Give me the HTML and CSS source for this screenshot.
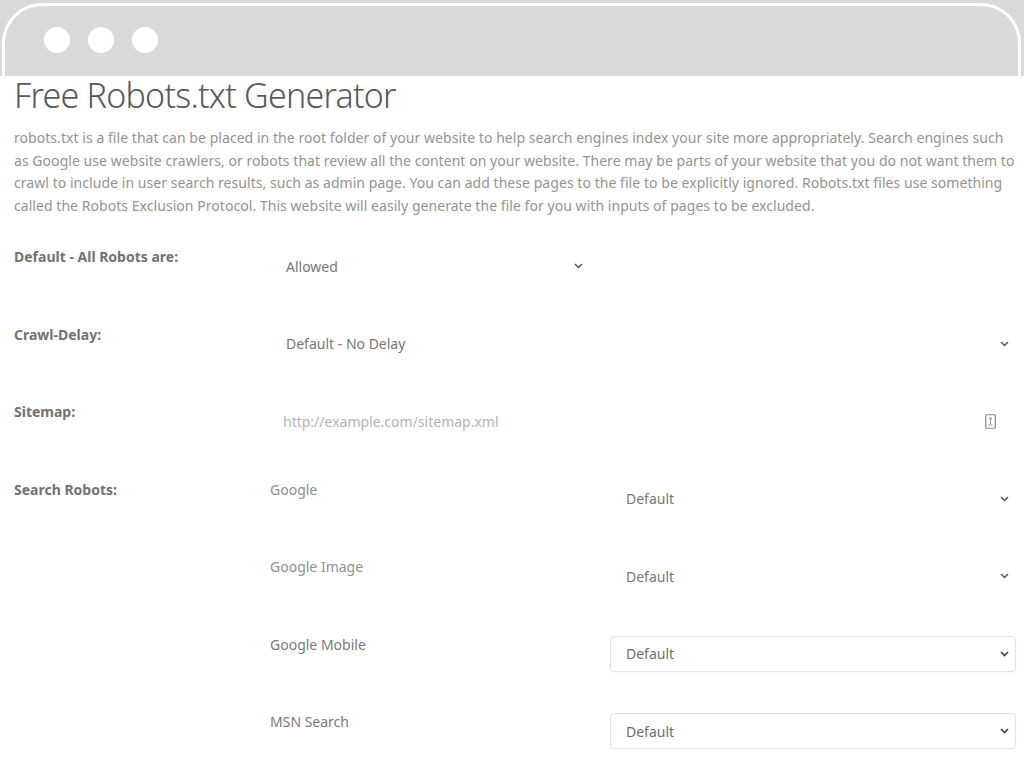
FILE: index.html
```html
<!DOCTYPE html>
<html lang="en">
<head>
<meta charset="utf-8">
<title>Free Robots.txt Generator</title>
<link rel="stylesheet" href="styles.css">
</head>
<body>
<header class="topbar">
  <div class="window">
    <span class="dot"></span><span class="dot"></span><span class="dot"></span>
  </div>
</header>
<main class="content">
  <h1 class="title">Free Robots.txt Generator</h1>
  <p class="intro">robots.txt is a file that can be placed in the root folder of your website to help search engines index your site more appropriately. Search engines such as Google use website crawlers, or robots that review all the content on your website. There may be parts of your website that you do not want them to crawl to include in user search results, such as admin page. You can add these pages to the file to be explicitly ignored. Robots.txt files use something called the Robots Exclusion Protocol. This website will easily generate the file for you with inputs of pages to be excluded.</p>

  <div class="form">
    <div class="row">
      <div class="label">Default - All Robots are:</div>
      <div class="select half"><span>Allowed</span><svg class="chev" width="9" height="6" viewBox="0 0 9 6"><path d="M1 1l3.5 3.5L8 1" fill="none" stroke="#555" stroke-width="1.5"/></svg></div>
    </div>
    <div class="row">
      <div class="label">Crawl-Delay:</div>
      <div class="select"><span>Default - No Delay</span><svg class="chev" width="9" height="6" viewBox="0 0 9 6"><path d="M1 1l3.5 3.5L8 1" fill="none" stroke="#555" stroke-width="1.5"/></svg></div>
    </div>
    <div class="row">
      <div class="label">Sitemap:</div>
      <div class="input"><span class="placeholder">http://example.com/sitemap.xml</span><svg class="card" width="11" height="15" viewBox="0 0 11 15"><rect x="0.75" y="0.75" width="9.5" height="13.5" rx="1" fill="none" stroke="#888" stroke-width="1.2"/><circle cx="5.5" cy="4.6" r="1.3" fill="#999"/><path d="M5.5 6v3.6M3.4 11h4.2" stroke="#999" stroke-width="1"/></svg></div>
    </div>
    <div class="row">
      <div class="label">Search Robots:</div>
      <div class="robots">
        <div class="robot">
          <div class="sublabel">Google</div>
          <div class="select"><span>Default</span><svg class="chev" width="9" height="6" viewBox="0 0 9 6"><path d="M1 1l3.5 3.5L8 1" fill="none" stroke="#555" stroke-width="1.5"/></svg></div>
        </div>
        <div class="robot">
          <div class="sublabel">Google Image</div>
          <div class="select"><span>Default</span><svg class="chev" width="9" height="6" viewBox="0 0 9 6"><path d="M1 1l3.5 3.5L8 1" fill="none" stroke="#555" stroke-width="1.5"/></svg></div>
        </div>
        <div class="robot">
          <div class="sublabel dark">Google Mobile</div>
          <div class="select boxed"><span>Default</span><svg class="chev" width="9" height="6" viewBox="0 0 9 6"><path d="M1 1l3.5 3.5L8 1" fill="none" stroke="#444" stroke-width="1.7"/></svg></div>
        </div>
        <div class="robot">
          <div class="sublabel dark">MSN Search</div>
          <div class="select boxed"><span>Default</span><svg class="chev" width="9" height="6" viewBox="0 0 9 6"><path d="M1 1l3.5 3.5L8 1" fill="none" stroke="#444" stroke-width="1.7"/></svg></div>
        </div>
      </div>
    </div>
  </div>
</main>
</body>
</html>
```

FILE: styles.css
```css
html, body {
  margin: 0;
  padding: 0;
  background: #ffffff;
}

body {
  font-family: "Noto Sans", "Open Sans", "DejaVu Sans", sans-serif;
  color: #555;
  overflow: hidden;
}

.topbar {
  background: #d9d9d9;
  height: 76px;
  box-sizing: border-box;
  padding: 3px 3px 0 2px;
}

.window {
  height: 100%;
  box-sizing: border-box;
  border: 3px solid #ffffff;
  border-bottom: none;
  border-radius: 40px 40px 0 0;
  display: flex;
  align-items: flex-start;
  gap: 18px;
  padding: 21px 0 0 39px;
}

.dot {
  width: 26px;
  height: 26px;
  border-radius: 50%;
  background: #ffffff;
}

.content {
  padding: 0 8px 0 14px;
}

.title {
  margin: 1px 0 0 0;
  font-size: 34px;
  line-height: 36px;
  font-weight: 300;
  letter-spacing: -0.75px;
  color: #595959;
}

.intro {
  margin: 14px 0 0 0;
  font-size: 14px;
  line-height: 22.5px;
  letter-spacing: 0.05px;
  color: #939393;
}

.form {
  margin-top: 31px;
  display: flex;
  flex-direction: column;
  gap: 41.5px;
}

.row {
  display: grid;
  grid-template-columns: 256px 1fr;
  align-items: start;
}

.label {
  font-size: 14px;
  line-height: 18px;
  font-weight: 700;
  color: #727272;
}

.select, .input {
  height: 36px;
  box-sizing: border-box;
  border: 1px solid transparent;
  border-radius: 4px;
  display: flex;
  align-items: center;
  justify-content: space-between;
  padding: 0 6px 0 15px;
  font-size: 14px;
  color: #777;
}

.select.half {
  width: 320px;
}

.select.boxed {
  border-color: #e3e3e3;
  box-shadow: 0 1px 2px rgba(0, 0, 0, 0.04);
  color: #6e6e6e;
}

.input {
  padding: 0 19px 0 12px;
}

.placeholder {
  color: #b3b3b3;
}

.chev, .card {
  display: block;
  flex: none;
}

.robots {
  display: flex;
  flex-direction: column;
  gap: 41.5px;
}

.robot {
  display: grid;
  grid-template-columns: 340px 1fr;
  align-items: start;
}

.sublabel {
  font-size: 14px;
  line-height: 18px;
  color: #8f8f8f;
}

.sublabel.dark {
  color: #7a7a7a;
}
```
